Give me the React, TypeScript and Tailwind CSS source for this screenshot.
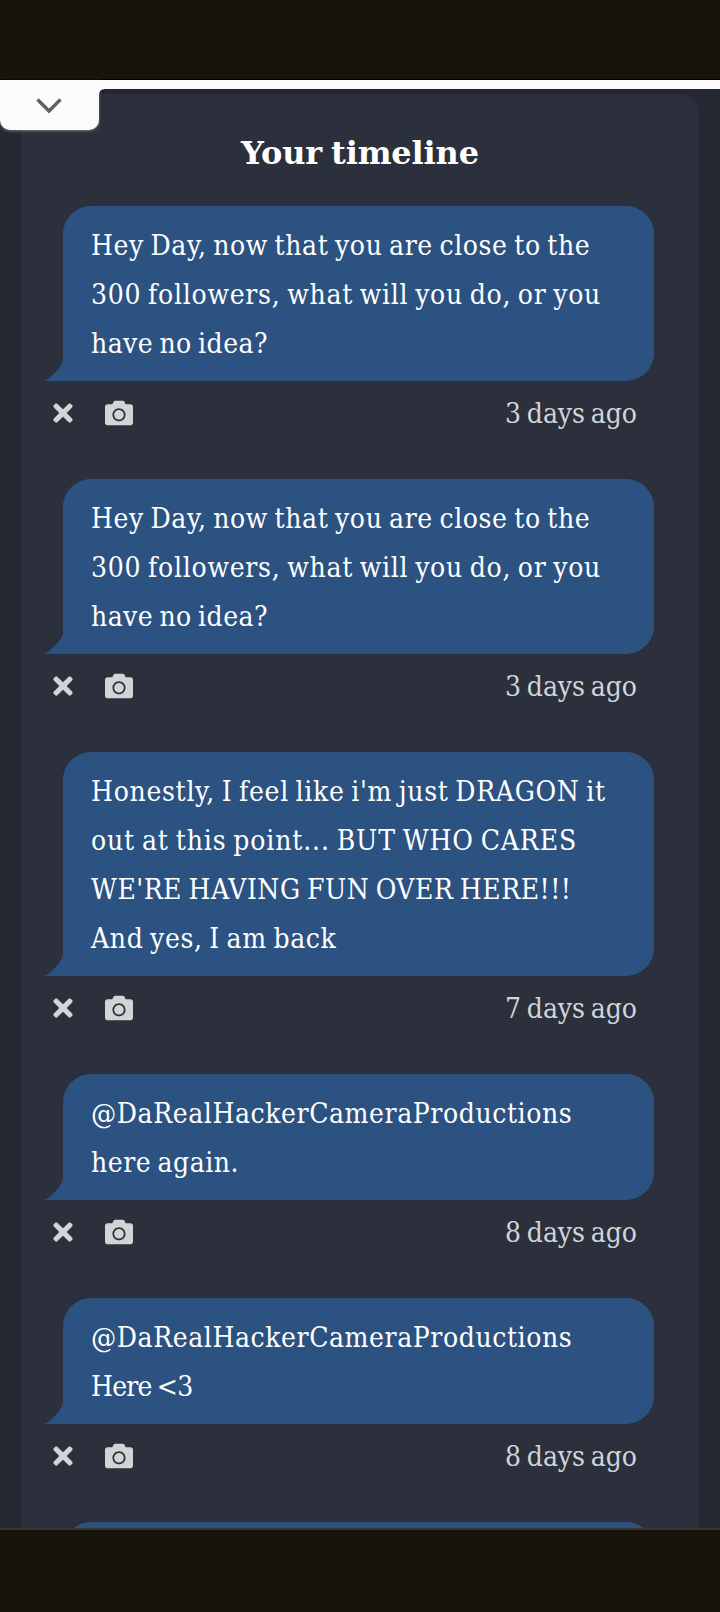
import { FaCamera, FaTimes } from 'react-icons/fa';

interface Line {
  text: string;
  tracking: string;
}

interface Post {
  id: number;
  lines: Line[];
  time: string;
}

const QUESTION: Line[] = [
  { text: 'Hey Day, now that you are close to the', tracking: 'tracking-[0.6px]' },
  { text: '300 followers, what will you do, or you', tracking: 'tracking-[0.73px]' },
  { text: 'have no idea?', tracking: 'tracking-[0.42px]' },
];

const POSTS: Post[] = [
  { id: 1, lines: QUESTION, time: '3 days ago' },
  { id: 2, lines: QUESTION, time: '3 days ago' },
  {
    id: 3,
    lines: [
      { text: "Honestly, I feel like i'm just DRAGON it", tracking: 'tracking-[0.68px]' },
      { text: 'out at this point... BUT WHO CARES', tracking: 'tracking-[0.86px]' },
      { text: "WE'RE HAVING FUN OVER HERE!!!", tracking: 'tracking-[0.49px]' },
      { text: 'And yes, I am back', tracking: 'tracking-[0.64px]' },
    ],
    time: '7 days ago',
  },
  {
    id: 4,
    lines: [
      { text: '@DaRealHackerCameraProductions', tracking: 'tracking-[0.58px]' },
      { text: 'here again.', tracking: 'tracking-[0.5px]' },
    ],
    time: '8 days ago',
  },
  {
    id: 5,
    lines: [
      { text: '@DaRealHackerCameraProductions', tracking: 'tracking-[0.58px]' },
      { text: 'Here <3', tracking: 'tracking-[-0.8px]' },
    ],
    time: '8 days ago',
  },
];

function TimelinePost({ post }: { post: Post }) {
  return (
    <article className="mb-[33px]">
      <div className="relative ml-[42px] w-[591px] rounded-[28px] rounded-bl-none bg-[#2c5282] px-7 py-3.5 text-white">
        {post.lines.map((line, i) => (
          <p key={i} className={`h-[49px] whitespace-nowrap leading-[52px] [word-spacing:-2px] ${line.tracking}`}>
            {line.text}
          </p>
        ))}
        {/* speech tail */}
        <svg className="absolute -left-[21px] bottom-0 h-[21px] w-[22px]" viewBox="0 0 22 21">
          <path d="M21 0C20 5 16 10 11 14.5C6 19 4 21 0 21H22V0Z" fill="#2c5282" />
        </svg>
      </div>
      <div className="flex h-[65px] items-center pl-8 pr-[62px] text-[#d3d4d6]">
        <button className="mr-8 mb-0.5" aria-label="Delete">
          <FaTimes className="h-7 w-5" />
        </button>
        <button className="mb-0.5" aria-label="Share">
          <FaCamera className="size-7" />
        </button>
        <time className="ml-auto leading-[66px] tracking-[-0.05px] [word-spacing:-2px]">{post.time}</time>
      </div>
    </article>
  );
}

export default function App() {
  return (
    <div className="flex h-[1612px] w-[720px] flex-col overflow-hidden bg-[#17140d] font-['DejaVu_Serif_Condensed','DejaVu_Serif',serif] text-[28px]">
      <div className="h-20 shrink-0 border-b border-black" />

      <div className="relative h-[9px] shrink-0 bg-[#fbfbfb]">
        <button
          aria-label="Collapse"
          className="absolute left-0 top-0 z-10 flex h-[50px] w-[99px] items-center justify-center rounded-b-[10px] bg-[#fbfbfb] pr-0.5 shadow-[0_1px_3px_rgba(255,255,255,0.35)]"
        >
          <svg className="mt-[2px] h-4 w-[26px]" viewBox="0 0 26 16" fill="none">
            <path d="M1.5 1.5L13 13L24.5 1.5" stroke="#616161" strokeWidth="3.4" />
          </svg>
        </button>
        <svg className="absolute left-[99px] top-[9px] size-[6px]" viewBox="0 0 6 6">
          <path d="M0 0H6Q0 0 0 6Z" fill="#fbfbfb" />
        </svg>
      </div>

      <main className="h-[1439px] shrink-0 overflow-hidden bg-[#252934] px-[21px] pt-[5px] shadow-[inset_0_5px_4px_rgba(32,40,44,0.5)]">
        <section className="h-[1600px] rounded-t-[20px] bg-[#2b303c]">
          <h1 className="h-28 pt-[31px] text-center font-['DejaVu_Serif',serif] text-[32px] font-bold leading-[56px] tracking-[-0.15px] text-white [word-spacing:-2px]">
            Your timeline
          </h1>
          {POSTS.map((post) => (
            <TimelinePost key={post.id} post={post} />
          ))}
          <div className="ml-[42px] h-[126px] w-[591px] rounded-[28px] bg-[#2c5282]" />
        </section>
      </main>

      <div className="h-[84px] shrink-0 border-t-2 border-[#38352a]" />
    </div>
  );
}
